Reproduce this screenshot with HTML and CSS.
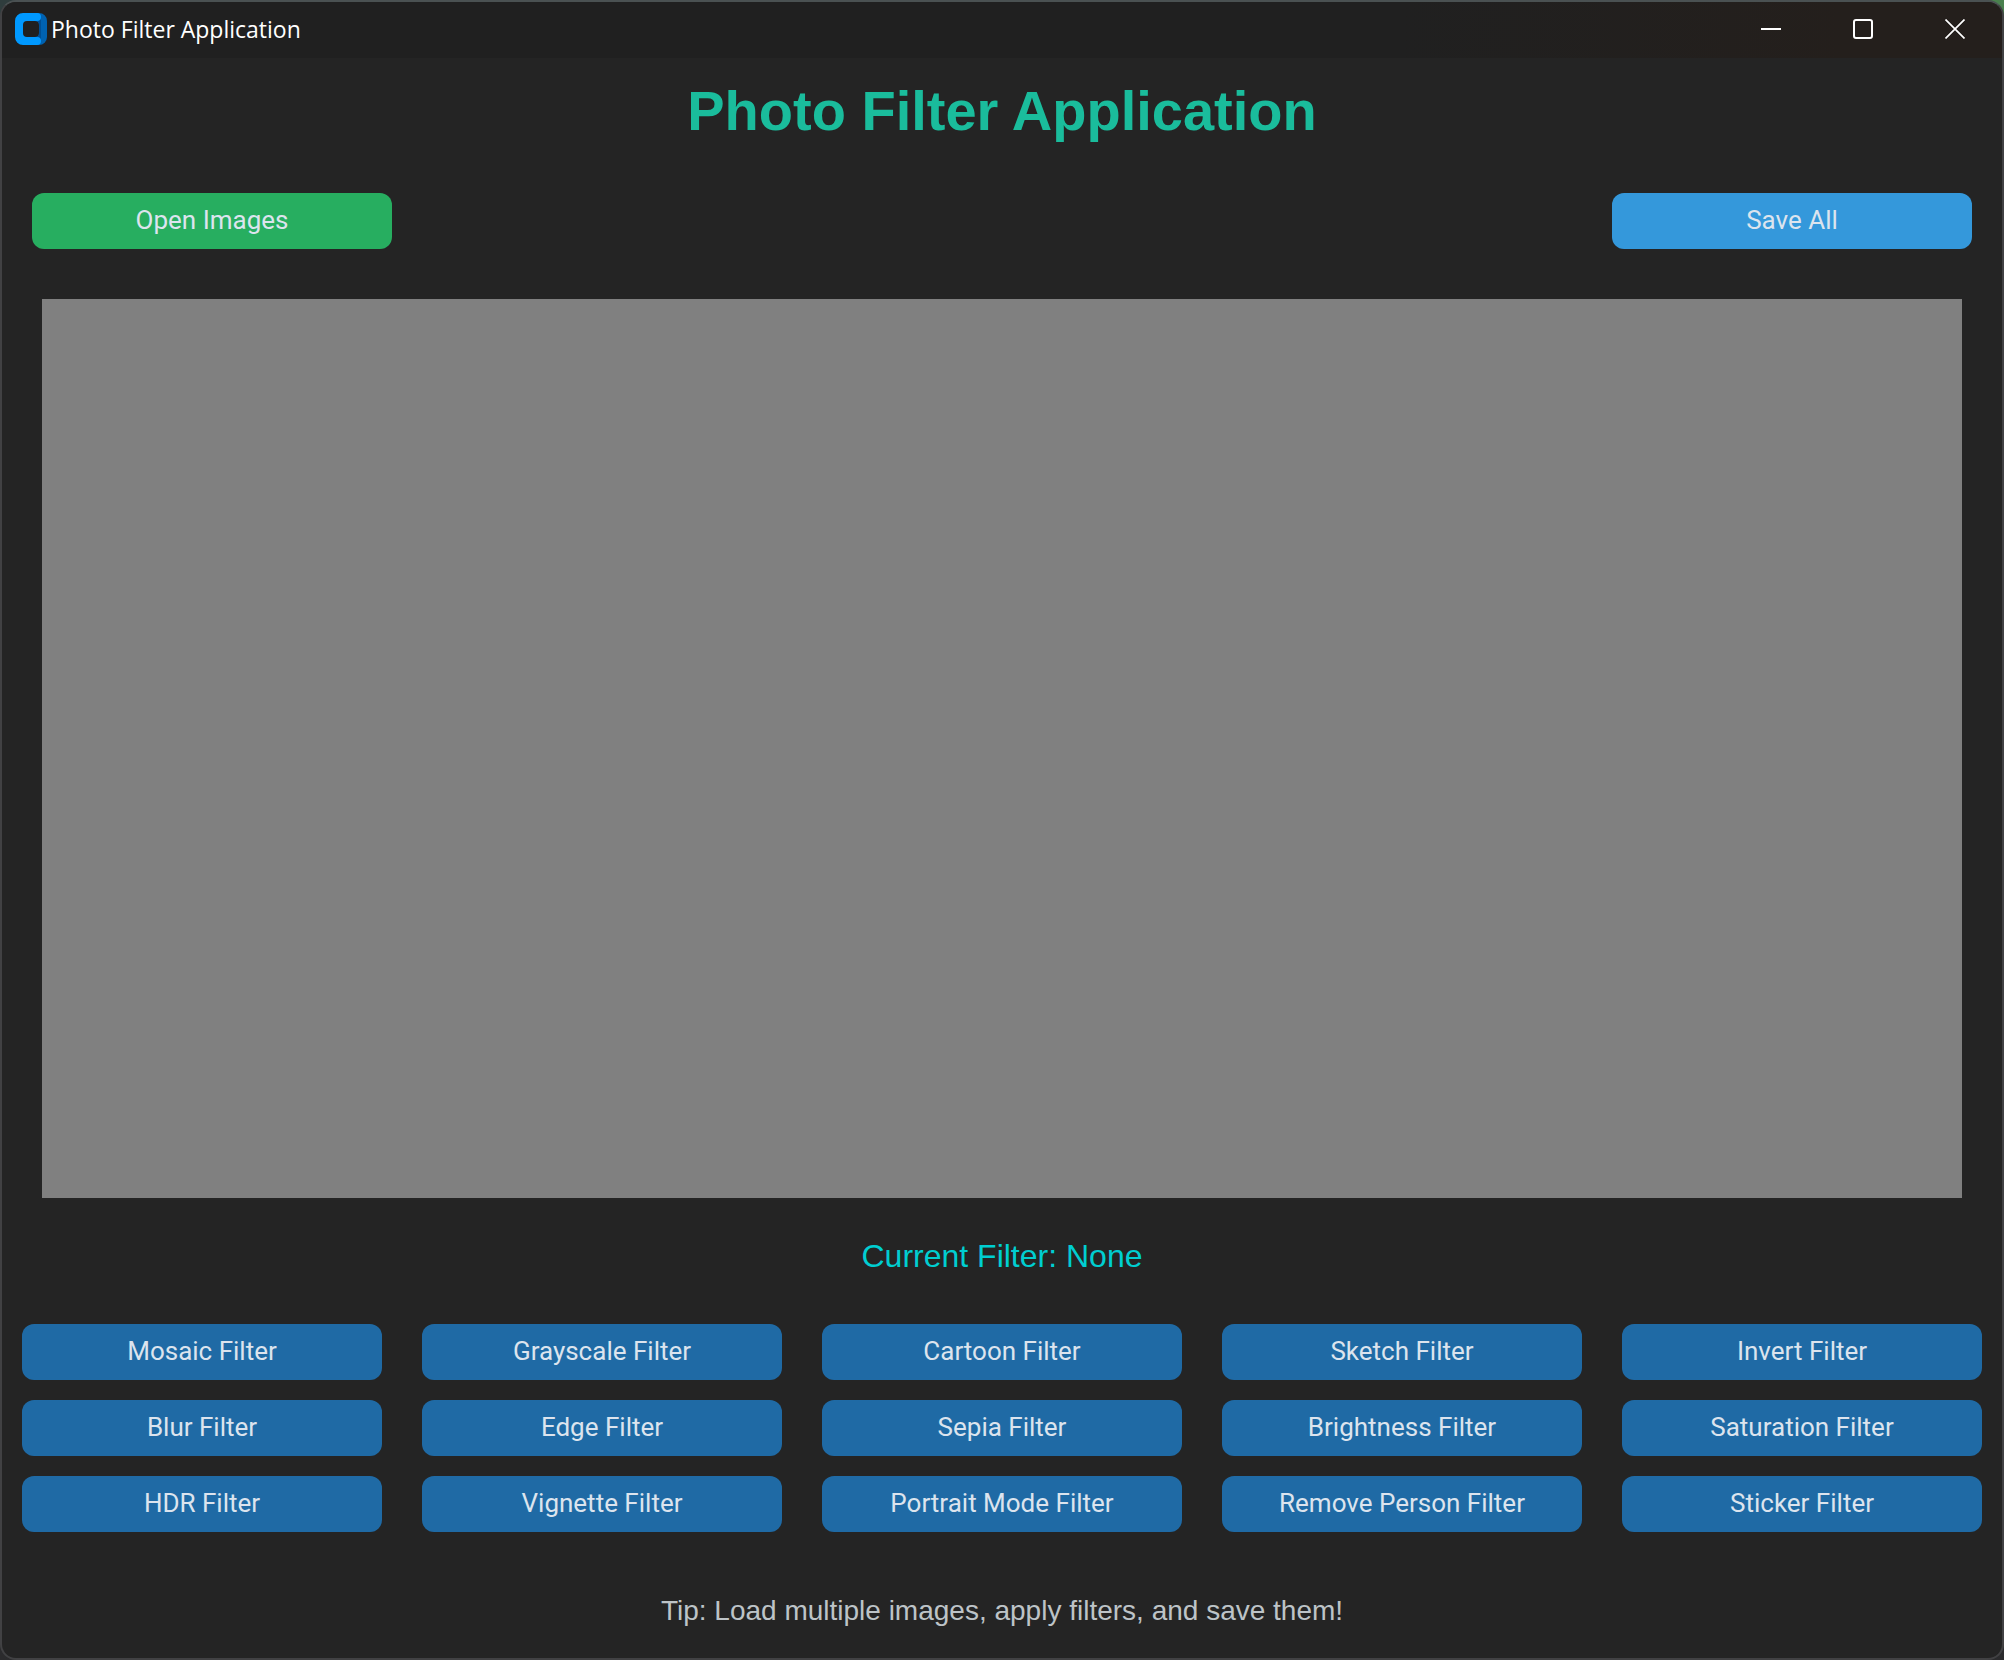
FILE: index.html
```html
<!DOCTYPE html>
<html lang="en">
<head>
<meta charset="utf-8">
<title>Photo Filter Application</title>
<link rel="stylesheet" href="styles.css">
</head>
<body>
<div class="window">
  <header class="titlebar">
    <svg class="app-icon" viewBox="0 0 32 32" aria-hidden="true">
      <path fill="#0062b1" d="M20 0h4a8 8 0 0 1 8 8v16a8 8 0 0 1-8 8h-4v-8a4 4 0 0 0 4-4v-8a4 4 0 0 0-4-4z"/>
      <path fill="#004f94" d="M20 8h2a4 4 0 0 0 4-4v24a4 4 0 0 0-4-4h-2a4 4 0 0 0 4-4v-8a4 4 0 0 0-4-4z"/>
      <path fill="#0099ff" d="M8 0h14a4 4 0 0 1 0 8h-10a4 4 0 0 0-4 4v8a4 4 0 0 0 4 4h10a4 4 0 0 1 0 8h-14a8 8 0 0 1-8-8v-16a8 8 0 0 1 8-8z"/>
    </svg>
    <span class="titlebar-text">Photo Filter Application</span>
    <div class="window-controls">
      <button class="window-button" type="button" aria-label="Minimize">
        <svg viewBox="0 0 20 20" aria-hidden="true"><path d="M0 10h20" stroke-width="2"/></svg>
      </button>
      <button class="window-button" type="button" aria-label="Maximize">
        <svg viewBox="0 0 20 20" aria-hidden="true"><rect x="1" y="1" width="18" height="18" rx="2" stroke-width="2"/></svg>
      </button>
      <button class="window-button" type="button" aria-label="Close">
        <svg viewBox="0 0 20 20" aria-hidden="true"><path d="M.5.5l19 19M19.500.5l-19 19" stroke-width="1.700"/></svg>
      </button>
    </div>
  </header>
  <main class="content">
    <h1 class="heading">Photo Filter Application</h1>
    <div class="actions">
      <button class="button button-open" type="button">Open Images</button>
      <button class="button button-save" type="button">Save All</button>
    </div>
    <div class="preview"></div>
    <p class="status">Current Filter: None</p>
    <div class="filters">
      <button class="button" type="button">Mosaic Filter</button>
      <button class="button" type="button">Grayscale Filter</button>
      <button class="button" type="button">Cartoon Filter</button>
      <button class="button" type="button">Sketch Filter</button>
      <button class="button" type="button">Invert Filter</button>
      <button class="button" type="button">Blur Filter</button>
      <button class="button" type="button">Edge Filter</button>
      <button class="button" type="button">Sepia Filter</button>
      <button class="button" type="button">Brightness Filter</button>
      <button class="button" type="button">Saturation Filter</button>
      <button class="button" type="button">HDR Filter</button>
      <button class="button" type="button">Vignette Filter</button>
      <button class="button" type="button">Portrait Mode Filter</button>
      <button class="button" type="button">Remove Person Filter</button>
      <button class="button" type="button">Sticker Filter</button>
    </div>
    <p class="tip">Tip: Load multiple images, apply filters, and save them!</p>
  </main>
</div>
</body>
</html>
```
FILE: styles.css
```css
* {
  box-sizing: border-box;
}

body {
  margin: 0;
  background: linear-gradient(90deg, #2f3d3d 0 50%, #4a804e 50%) top / 100% 40px no-repeat #2b2b2d;
  font-family: "Liberation Sans", Arial, sans-serif;
}

.window {
  display: flex;
  flex-direction: column;
  min-height: 100vh;
  border: 2px solid #414143;
  border-top-color: #4a5152;
  border-radius: 16px;
  background: #242424;
  overflow: hidden;
}

.titlebar {
  display: flex;
  align-items: center;
  height: 56px;
  padding: 0 1px 2px 13px;
  background: linear-gradient(90deg, #202020 70%, #241f1c 92%);
}

.app-icon {
  width: 32px;
  height: 32px;
}

.titlebar-text {
  margin-left: 4px;
  color: #fff;
  font: 23px/32px "Open Sans", "Segoe UI", sans-serif;
}

.window-controls {
  display: flex;
  align-self: stretch;
  margin-left: auto;
}

.window-button {
  display: grid;
  place-items: center;
  width: 92px;
  padding: 0;
  border: 0;
  background: none;
}

.window-button svg {
  width: 20px;
  height: 20px;
  fill: none;
  stroke: #fff;
}

.content {
  display: flex;
  flex: 1;
  flex-direction: column;
  padding: 21px 20px 20px;
}

.heading {
  margin: 0;
  color: #1abc9c;
  font-size: 56px;
  line-height: 64px;
  text-align: center;
}

.actions {
  display: flex;
  justify-content: space-between;
  margin: 50px 10px;
}

.button {
  width: 360px;
  height: 56px;
  padding: 0 0 2px;
  border: 0;
  border-radius: 12px;
  background: #1f6aa5;
  color: #dce4ee;
  font: 26px/32px Roboto, sans-serif;
}

.button-open {
  background: #27ae60;
}

.button-save {
  background: #3498db;
}

.preview {
  flex: 1;
  min-height: 300px;
  margin: 0 20px;
  background: #808080;
}

.status {
  margin: 40px 0 50px;
  color: #00ced1;
  font-size: 32px;
  line-height: 36px;
  text-align: center;
}

.filters {
  display: grid;
  grid-template-columns: repeat(5, 1fr);
  gap: 20px 40px;
}

.filters .button {
  width: 100%;
}

.tip {
  margin: 63px 0 11px;
  color: #bdc3c7;
  font-size: 28px;
  line-height: 32px;
  text-align: center;
}
```
